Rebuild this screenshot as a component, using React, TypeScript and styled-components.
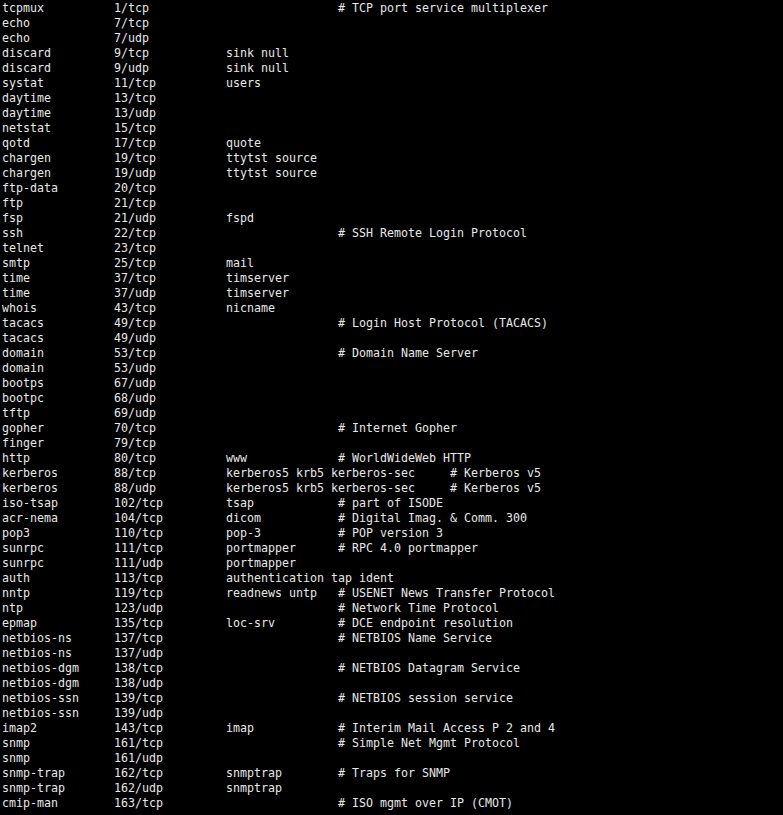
import React from "react";
import styled, { createGlobalStyle } from "styled-components";

const Global = createGlobalStyle`
  html, body { margin: 0; padding: 0; background: #000; }
  body { overflow: hidden; }
`;

const Terminal = styled.div`
  background: #000;
  color: #e8e8e8;
  font-family: "DejaVu Sans Mono", "Liberation Mono", monospace;
  font-size: 11.63px;
  line-height: 15px;
  padding: 1px 0 0 2px;
  width: 783px;
  height: 815px;
  box-sizing: border-box;
  overflow: hidden;
`;

const Line = styled.div`
  white-space: pre;
  height: 15px;
`;

type Entry = [string, string, string?, string?];

const entries: Entry[] = [
  ["tcpmux", "1/tcp", "", "# TCP port service multiplexer"],
  ["echo", "7/tcp"],
  ["echo", "7/udp"],
  ["discard", "9/tcp", "sink null"],
  ["discard", "9/udp", "sink null"],
  ["systat", "11/tcp", "users"],
  ["daytime", "13/tcp"],
  ["daytime", "13/udp"],
  ["netstat", "15/tcp"],
  ["qotd", "17/tcp", "quote"],
  ["chargen", "19/tcp", "ttytst source"],
  ["chargen", "19/udp", "ttytst source"],
  ["ftp-data", "20/tcp"],
  ["ftp", "21/tcp"],
  ["fsp", "21/udp", "fspd"],
  ["ssh", "22/tcp", "", "# SSH Remote Login Protocol"],
  ["telnet", "23/tcp"],
  ["smtp", "25/tcp", "mail"],
  ["time", "37/tcp", "timserver"],
  ["time", "37/udp", "timserver"],
  ["whois", "43/tcp", "nicname"],
  ["tacacs", "49/tcp", "", "# Login Host Protocol (TACACS)"],
  ["tacacs", "49/udp"],
  ["domain", "53/tcp", "", "# Domain Name Server"],
  ["domain", "53/udp"],
  ["bootps", "67/udp"],
  ["bootpc", "68/udp"],
  ["tftp", "69/udp"],
  ["gopher", "70/tcp", "", "# Internet Gopher"],
  ["finger", "79/tcp"],
  ["http", "80/tcp", "www", "# WorldWideWeb HTTP"],
  ["kerberos", "88/tcp", "kerberos5 krb5 kerberos-sec", "# Kerberos v5"],
  ["kerberos", "88/udp", "kerberos5 krb5 kerberos-sec", "# Kerberos v5"],
  ["iso-tsap", "102/tcp", "tsap", "# part of ISODE"],
  ["acr-nema", "104/tcp", "dicom", "# Digital Imag. & Comm. 300"],
  ["pop3", "110/tcp", "pop-3", "# POP version 3"],
  ["sunrpc", "111/tcp", "portmapper", "# RPC 4.0 portmapper"],
  ["sunrpc", "111/udp", "portmapper"],
  ["auth", "113/tcp", "authentication tap ident"],
  ["nntp", "119/tcp", "readnews untp", "# USENET News Transfer Protocol"],
  ["ntp", "123/udp", "", "# Network Time Protocol"],
  ["epmap", "135/tcp", "loc-srv", "# DCE endpoint resolution"],
  ["netbios-ns", "137/tcp", "", "# NETBIOS Name Service"],
  ["netbios-ns", "137/udp"],
  ["netbios-dgm", "138/tcp", "", "# NETBIOS Datagram Service"],
  ["netbios-dgm", "138/udp"],
  ["netbios-ssn", "139/tcp", "", "# NETBIOS session service"],
  ["netbios-ssn", "139/udp"],
  ["imap2", "143/tcp", "imap", "# Interim Mail Access P 2 and 4"],
  ["snmp", "161/tcp", "", "# Simple Net Mgmt Protocol"],
  ["snmp", "161/udp"],
  ["snmp-trap", "162/tcp", "snmptrap", "# Traps for SNMP"],
  ["snmp-trap", "162/udp", "snmptrap"],
  ["cmip-man", "163/tcp", "", "# ISO mgmt over IP (CMOT)"],
];

const padTo = (s: string, col: number) => {
  let out = s;
  if (out.length < col) out = out + " ".repeat(col - out.length);
  else {
    const next = (Math.floor(out.length / 8) + 1) * 8;
    out = out + " ".repeat(next - out.length);
  }
  return out;
};

const formatEntry = ([name, port, alias, comment]: Entry) => {
  let s = padTo(name, 16) + port;
  if (alias || comment) {
    s = padTo(s, 32) + (alias || "");
  }
  if (comment) {
    s = padTo(s, 48) + comment;
  }
  return s;
};

export default function App() {
  return (
    <>
      <Global />
      <Terminal>
        {entries.map((e, i) => (
          <Line key={i}>{formatEntry(e)}</Line>
        ))}
      </Terminal>
    </>
  );
}
